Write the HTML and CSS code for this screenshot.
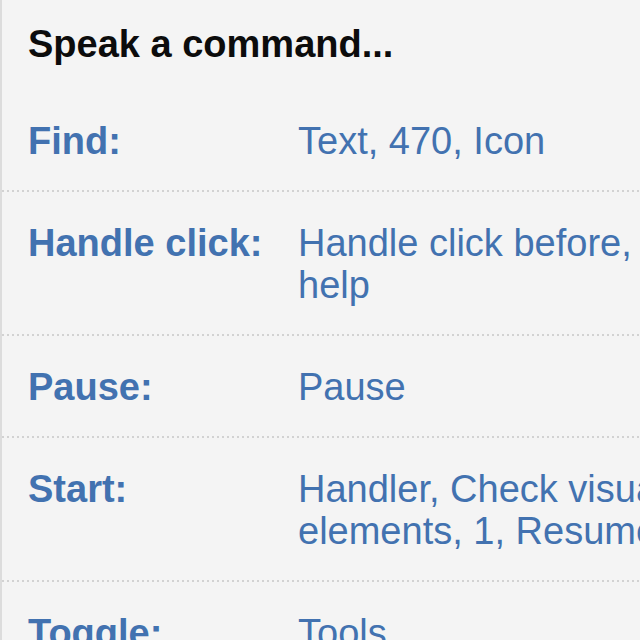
FILE: index.html
```html
<!DOCTYPE html>
<html lang="en">
<head>
<meta charset="utf-8">
<title>Speak a command</title>
<link rel="stylesheet" href="styles.css">
</head>
<body>
<div class="panel">
  <h1 class="title">Speak a command...</h1>
  <dl class="commands">
    <div class="row">
      <dt class="label">Find:</dt>
      <dd class="value">Text, 470, Icon</dd>
    </div>
    <div class="row">
      <dt class="label">Handle click:</dt>
      <dd class="value">Handle click before, help</dd>
    </div>
    <div class="row">
      <dt class="label">Pause:</dt>
      <dd class="value">Pause</dd>
    </div>
    <div class="row">
      <dt class="label">Start:</dt>
      <dd class="value">Handler, Check visual elements, 1, Resume</dd>
    </div>
    <div class="row">
      <dt class="label">Toggle:</dt>
      <dd class="value">Tools</dd>
    </div>
  </dl>
</div>
</body>
</html>
```

FILE: styles.css
```css
html, body {
  margin: 0;
  padding: 0;
  overflow: hidden;
  background: #f4f4f4;
}

body {
  width: 640px;
  height: 640px;
  font-family: "Liberation Sans", Arial, Helvetica, sans-serif;
  font-size: 38px;
  line-height: 42px;
}

.panel {
  width: 700px;
  min-height: 700px;
  border-left: 2px solid #dcdcdc;
  background: #f4f4f4;
  box-sizing: border-box;
}

.title {
  margin: 0;
  padding: 23px 0 25px 26px;
  font-size: 38px;
  line-height: 42px;
  font-weight: bold;
  color: #0c0c0c;
}

.commands {
  margin: 0;
}

.row {
  display: grid;
  grid-template-columns: 270px 392px;
  padding: 30px 0 30px 26px;
  background-image: repeating-linear-gradient(to right, #d2d2d2 0 2px, transparent 2px 5px);
  background-size: 100% 2px;
  background-position: left bottom;
  background-repeat: no-repeat;
}

.label {
  margin: 0;
  font-weight: bold;
  color: #4272b0;
}

.value {
  margin: 0;
  color: #4272b0;
}
```
